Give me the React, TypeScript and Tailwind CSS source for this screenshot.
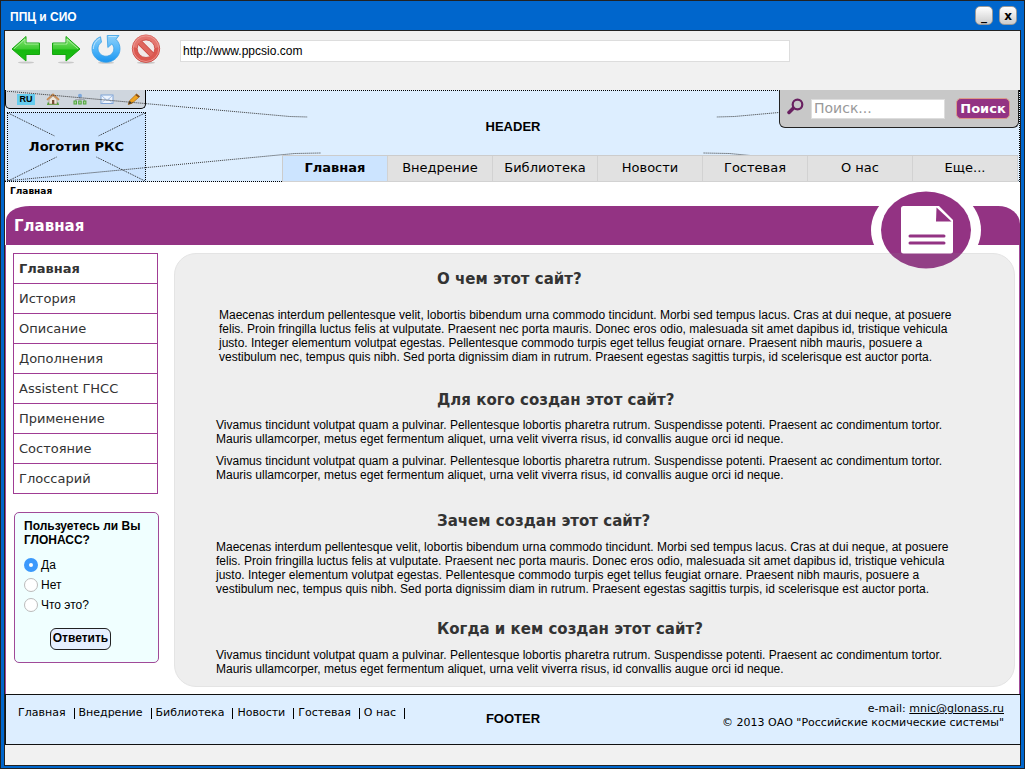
import { useState } from "react";

const tabs = ["Главная", "Внедрение", "Библиотека", "Новости", "Гостевая", "О нас", "Еще..."];
const sideItems = ["Главная", "История", "Описание", "Дополнения", "Assistent ГНСС", "Применение", "Состояние", "Глоссарий"];
const footerLinks = ["Главная", "Внедрение", "Библиотека", "Новости", "Гостевая", "О нас"];
const answers = ["Да", "Нет", "Что это?"];

const maecenas =
  "Maecenas interdum pellentesque velit, lobortis bibendum urna commodo tincidunt. Morbi sed tempus lacus. Cras at dui neque, at posuere felis. Proin fringilla luctus felis at vulputate. Praesent nec porta mauris. Donec eros odio, malesuada sit amet dapibus id, tristique vehicula justo. Integer elementum volutpat egestas. Pellentesque commodo turpis eget tellus feugiat ornare. Praesent nibh mauris, posuere a vestibulum nec, tempus quis nibh. Sed porta dignissim diam in rutrum. Praesent egestas sagittis turpis, id scelerisque est auctor porta.";
const vivamus =
  "Vivamus tincidunt volutpat quam a pulvinar. Pellentesque lobortis pharetra rutrum. Suspendisse potenti. Praesent ac condimentum tortor. Mauris ullamcorper, metus eget fermentum aliquet, urna velit viverra risus, id convallis augue orci id neque.";

function ArrowIcon({ flip = false }: { flip?: boolean }) {
  return (
    <svg width="30" height="30" viewBox="0 0 30 30" className={flip ? "-scale-x-100" : ""}>
      <defs>
        <linearGradient id="arrowFill" x1="0" y1="0" x2="0" y2="1">
          <stop offset="0" stopColor="#8ee67c" />
          <stop offset="0.5" stopColor="#3ecb32" />
          <stop offset="0.55" stopColor="#17b80f" />
          <stop offset="1" stopColor="#1cbf14" />
        </linearGradient>
      </defs>
      <ellipse cx="15" cy="28.500" rx="8" ry="1" fill="#c9c9c9" />
      <path d="M1 15 15 2.500v6.500H28.500v11.500H15V27z" fill="url(#arrowFill)" stroke="#16a510" strokeWidth="1" strokeLinejoin="round" />
      <path d="M3 14.800 14 5v5H27.500" fill="none" stroke="#b9f3ad" strokeWidth="0.8" />
    </svg>
  );
}

function ReloadIcon() {
  return (
    <svg width="30" height="30" viewBox="0 0 30 30">
      <defs>
        <linearGradient id="reloadFill" x1="0" y1="0" x2="0" y2="1">
          <stop offset="0" stopColor="#8fd0f8" />
          <stop offset="0.55" stopColor="#4db4fa" />
          <stop offset="1" stopColor="#1a94ee" />
        </linearGradient>
      </defs>
      <ellipse cx="15" cy="28.700" rx="8" ry="1" fill="#c9c9c9" />
      <path
        d="M9.500 2.800 10.500 8.200C8 9.800 6.800 12.300 7 15c.4 4.200 3.700 7.200 8 7.200s7.800-3.200 7.800-7.400c0-2-.7-3.600-1.900-4.900L16.800 13.500 16.200 1.500H28L25 5.300c2.500 2.500 4 5.700 4 9.500 0 7.500-6.200 13.500-14 13.500S1 22.300 1 14.800C1 9.300 4.500 4.600 9.500 2.800z"
        fill="url(#reloadFill)"
        stroke="#3a9fe6"
        strokeWidth="0.8"
      />
      <path d="M9 4.500C5 6.300 2.500 10 2.300 15M17.500 2.500H25.500" fill="none" stroke="#d3edfc" strokeWidth="0.8" />
    </svg>
  );
}

function StopIcon() {
  return (
    <svg width="30" height="30" viewBox="0 0 30 30">
      <ellipse cx="15" cy="28.700" rx="9" ry="1" fill="#c4c4c4" />
      <circle cx="15" cy="14.700" r="13.700" fill="#dc5850" stroke="#c8423c" strokeWidth="0.800" />
      <path d="M2.300 13a12.700 12.500 0 0 1 25.400 0c-8 3-17 3-25.400 0z" fill="#e98a84" opacity="0.600" />
      <circle cx="15" cy="14.700" r="8.800" fill="#f1eaea" stroke="#c8423c" strokeWidth="0.800" />
      <path d="m9 8.700 12 12" stroke="#c8423c" strokeWidth="5.500" />
      <path d="m8.800 8.500 12.400 12.400" stroke="#df665e" strokeWidth="4.200" />
      <circle cx="15" cy="14.700" r="12.800" fill="none" stroke="#f1aaa5" strokeWidth="0.700" />
    </svg>
  );
}

function HomeIcon() {
  return (
    <svg width="14" height="12" viewBox="0 0 14 12">
      <path d="M1 11.500h12" stroke="#69a84a" strokeWidth="1.200" />
      <path d="M3 6.500 7 3l4 3.500V11H3z" fill="#efe6da" stroke="#94806d" strokeWidth="0.600" />
      <path d="M1 6.800 7 1.300l6 5.500" fill="none" stroke="#c98a50" strokeWidth="1.700" />
      <path d="M6 7h2.300v4H6z" fill="#7b5138" />
      <path d="M1.500 9.500h1.500v2h-1.500zM11 9.500h1.500v2h-1.500z" fill="#4f9c37" />
    </svg>
  );
}

function SitemapIcon() {
  return (
    <svg width="14" height="12" viewBox="0 0 14 12">
      <path d="M7 4v3M2.500 8V6.500h9V8" fill="none" stroke="#9aa0a6" strokeWidth="0.800" />
      <circle cx="7" cy="2.800" r="2" fill="#7fa9dc" />
      <g fill="#a9d89a" stroke="#4fa43d" strokeWidth="1">
        <rect x="1" y="8" width="2.500" height="3" />
        <rect x="5.700" y="8" width="2.500" height="3" />
        <rect x="10.400" y="8" width="2.500" height="3" />
      </g>
    </svg>
  );
}

function MailIcon() {
  return (
    <svg width="14" height="12" viewBox="0 0 14 12">
      <rect x="1" y="2" width="12" height="8.500" fill="#edf4fd" stroke="#7ea3d6" />
      <path d="m1.500 2.500 5.500 5 5.500-5M1.500 10l4-3.800M12.500 10l-4-3.800" fill="none" stroke="#8fb0de" strokeWidth="0.800" />
    </svg>
  );
}

function PencilIcon() {
  return (
    <svg width="14" height="12" viewBox="0 0 14 12">
      <path d="M1.300 11.500 2.500 7.800 9.500 1l3.200 2.500L5 10.300z" fill="#f0a420" stroke="#a8650c" strokeWidth="0.700" />
      <path d="m9.500 1 3.200 2.500L11.500 4.600 8.400 2z" fill="#7d4a22" />
      <path d="M1.300 11.500 2.500 7.800 5 10.300z" fill="#4b3a26" />
    </svg>
  );
}

function DocumentBadge() {
  return (
    <svg width="112" height="93" viewBox="0 0 112 93">
      <clipPath id="abovePanel">
        <path d="M0 0h112v69H0z" />
      </clipPath>
      <clipPath id="overPanel">
        <path d="M0 69h112v24H0z" />
      </clipPath>
      <g clipPath="url(#abovePanel)">
        <ellipse cx="56" cy="46" rx="55" ry="46" fill="#fff" />
        <ellipse cx="56" cy="46" rx="45" ry="38.500" fill="#933383" />
      </g>
      <ellipse cx="56" cy="46" rx="45" ry="38.500" fill="#924086" clipPath="url(#overPanel)" />
      <path d="M33.500 22H69l14 14v31a2.500 2.500 0 0 1-2.500 2.500h-47A2.500 2.500 0 0 1 31 67V24.500a2.500 2.500 0 0 1 2.500-2.500z" fill="#fff" />
      <path d="M66.500 23.500 81.500 37.500H66z" fill="#933383" />
      <path d="M40 52h34M40 59h34" stroke="#933383" strokeWidth="3" strokeLinecap="round" />
    </svg>
  );
}

function Section({ title, children, className }: { title: string; children: React.ReactNode; className: string }) {
  return (
    <section className={className}>
      <h2 className="pl-[221px] text-[15px] leading-5 font-bold text-[#333] [font-family:'DejaVu_Sans',sans-serif]">{title}</h2>
      {children}
    </section>
  );
}

export default function App() {
  const [url, setUrl] = useState("http://www.ppcsio.com");
  const [answer, setAnswer] = useState("Да");

  return (
    <div className="mr-[3px] border border-[#222] bg-[#0066cc] px-[3px] pb-[2px] text-[12px] text-black [font-family:'Liberation_Sans',Arial,sans-serif]">
      <div className="flex h-[29px] items-center justify-between pr-1 pl-1.5">
        <h1 className="pt-0.5 text-[12px] font-bold text-white">ППЦ и СИО</h1>
        <div className="flex gap-1.5 [font-family:'DejaVu_Sans',sans-serif]">
          <button aria-label="Свернуть" className="h-[19px] w-[18px] rounded-[5px] border border-[#999] bg-linear-to-b from-white to-[#ccc] text-[12px] leading-3 font-bold">_</button>
          <button aria-label="Закрыть" className="h-[19px] w-[18px] rounded-[5px] border border-[#999] bg-linear-to-b from-white to-[#ccc] text-[12px] leading-3 font-bold">x</button>
        </div>
      </div>

      <div className="border border-[#222] bg-[#f1f1f1]">
        <div className="flex h-[59px] items-start pt-[3px] pl-1.5">
          <div className="flex w-[169px] gap-2.5">
            <button aria-label="Назад"><ArrowIcon /></button>
            <button aria-label="Вперёд"><ArrowIcon flip /></button>
            <button aria-label="Обновить"><ReloadIcon /></button>
            <button aria-label="Остановить"><StopIcon /></button>
          </div>
          <input
            aria-label="Адрес"
            value={url}
            onChange={(e) => setUrl(e.target.value)}
            className="mt-1.5 mr-[230px] h-[22px] min-w-0 flex-1 border border-[#ddd] bg-white px-0.5 text-[12px]"
          />
        </div>

        <header className="relative flex h-[92px] border border-l-0 border-dotted border-black bg-[#ddeeff]">
          <div className="pointer-events-none absolute inset-0 flex items-center justify-center pb-[19px] pl-0.5 text-[13px] font-bold">HEADER</div>
          <div className="flex w-[141px] flex-col justify-between">
            <div className="-mt-px flex h-[19px] items-center rounded-b-[5px] border border-t-0 border-black bg-[#cfd6de] pl-[11px]">
              <button className="mr-[11px] h-[11px] w-[18px] bg-[#66ccee] text-[9px] leading-[10px] font-bold">RU</button>
              <nav className="flex gap-[13px]">
                <a href="#home" aria-label="Домой"><HomeIcon /></a>
                <a href="#map" aria-label="Карта сайта"><SitemapIcon /></a>
                <a href="#mail" aria-label="Почта"><MailIcon /></a>
                <a href="#edit" aria-label="Правка"><PencilIcon /></a>
              </nav>
            </div>
            <div className="relative -mb-px ml-0.5 flex h-[70px] items-center justify-center border border-dotted border-black bg-[#cce4ff] text-[13px] font-bold [font-family:'DejaVu_Sans',sans-serif]">
              <svg className="absolute inset-0 h-full w-full" viewBox="0 0 138 68" preserveAspectRatio="none" stroke="#222" strokeWidth="1" strokeDasharray="1 1">
                <path d="M0 0 47 23M138 0 91 23M0 68 49 44M138 68 89 44" />
              </svg>
              <span className="relative">Логотип РКС</span>
            </div>
          </div>
          <svg className="pointer-events-none absolute inset-0 h-full w-full" viewBox="0 0 1015 90" preserveAspectRatio="none" stroke="#333" fill="none" strokeDasharray="1 1">
            <path d="M0 0 285 25.500 303 26M1015 0 730 25.500 712 26M0 90 290 62.500 316 62M1015 90 725 62.500 699 62" />
          </svg>
          <div className="relative flex min-w-0 flex-1 flex-col items-end justify-between">
            <form
              onSubmit={(e) => e.preventDefault()}
              className="-mt-px flex h-[38px] w-[240px] items-center rounded-b-[6px] border border-t-0 border-[#222] bg-[#c8c8c8] pr-2 pl-[7px] [font-family:'DejaVu_Sans',sans-serif]"
            >
              <svg width="17" height="17" viewBox="0 0 17 17" fill="none" stroke="#692060" className="mb-1 mr-[7px]">
                <circle cx="10.500" cy="6.500" r="4.800" strokeWidth="2.200" />
                <path d="m6 10.500-4 4" strokeWidth="3.500" strokeLinecap="round" />
              </svg>
              <input
                aria-label="Поиск"
                placeholder="Поиск..."
                className="h-5 w-[134px] border border-[#ddd] bg-white px-0.5 text-[14px] placeholder:text-[#999]"
              />
              <button className="ml-auto h-[21px] w-[54px] rounded-[5px] border border-[#dd9988] bg-[#933383] text-[13px] leading-4 font-bold text-white">Поиск</button>
            </form>
            <nav className="-mb-px mr-px grid w-[736px] grid-cols-7 border-t border-l border-[#ccc] text-[13px] [font-family:'DejaVu_Sans',sans-serif]">
              {tabs.map((t, i) => (
                <a
                  key={t}
                  href={"#tab" + i}
                  className={
                    "flex h-[26px] items-center justify-center border-r border-b border-[#d2d2d2] pb-0.5 " +
                    (i === 0 ? "bg-[#cce4ff] font-bold" : "bg-[#e1e1e1]")
                  }
                >
                  {t}
                </a>
              ))}
            </nav>
          </div>
        </header>

        <div className="h-6 bg-white pt-px pl-[5px] text-[9px] leading-4 font-bold [font-family:'DejaVu_Sans',sans-serif]">Главная</div>

        <div className="bg-white">
          <div className="relative ml-px flex h-[39px] items-center rounded-tl-[24px_14px] rounded-tr-[22px_18px] bg-[#933383] pl-2">
            <h2 className="pt-px text-[15px] font-bold text-white [font-family:'DejaVu_Sans',sans-serif]">Главная</h2>
            <div className="absolute -top-[22px] right-[38px] z-10"><DocumentBadge /></div>
          </div>
        </div>

        <main className="flex items-start gap-4 border-x border-[#a04a98] bg-white px-[7px] pt-2 pb-[7px]">
          <aside className="w-[145px] shrink-0">
            <nav className="grid gap-px bg-[#a03c94] p-px text-[13px] text-[#333] [font-family:'DejaVu_Sans',sans-serif]">
              {sideItems.map((s, i) => (
                <a key={s} href={"#side" + i} className={"flex h-[29px] items-center bg-white pl-[5px] " + (i === 0 ? "font-bold" : "")}>
                  {s}
                </a>
              ))}
            </nav>
            <form
              onSubmit={(e) => e.preventDefault()}
              className="mt-[18px] ml-px -mr-px h-[151px] rounded-[5px] border border-[#a04a98] bg-[#f0ffff] pt-1.5 pl-[9px]"
            >
              <fieldset>
                <legend className="mb-2 text-[12px] leading-[14px] font-bold">Пользуетесь ли Вы ГЛОНАСС?</legend>
                {answers.map((a) => (
                  <label key={a} className="flex h-5 items-center gap-[3px]">
                    <input
                      type="radio"
                      name="poll"
                      checked={answer === a}
                      onChange={() => setAnswer(a)}
                      className="size-3.5 appearance-none rounded-full border border-[#bbb] bg-white checked:border-5 checked:border-[#3b99fc]"
                    />
                    {a}
                  </label>
                ))}
              </fieldset>
              <button className="mt-[13px] ml-[26px] h-[22px] w-[61px] rounded-[6px] border border-[#222] bg-[#e6f0ff] pb-1 text-[12px] font-bold">Ответить</button>
            </form>
          </aside>

          <article className="-mr-[3px] min-w-0 flex-1 rounded-[22px] border border-[#e4e4e4] bg-[#eee] pt-[15px] pr-[53px] pb-2.5 pl-[41px] leading-[14px]">
            <Section title="О чем этот сайт?" className="mb-[26px]">
              <p className="mt-[19px] ml-[3px]">{maecenas}</p>
            </Section>
            <Section title="Для кого создан этот сайт?" className="mb-[29px]">
              <p className="mt-2">{vivamus}</p>
              <p className="mt-2">{vivamus}</p>
            </Section>
            <Section title="Зачем создан этот сайт?" className="mb-[23px]">
              <p className="mt-[9px]">{maecenas}</p>
            </Section>
            <Section title="Когда и кем создан этот сайт?" className="">
              <p className="mt-[9px]">{vivamus}</p>
            </Section>
          </article>
        </main>

        <footer className="relative -mr-px flex h-[51px] justify-between border border-[#111] bg-[#ddeeff] pr-4 pl-3 text-[11px] leading-[14px] [font-family:'DejaVu_Sans',sans-serif]">
          <div className="pointer-events-none absolute inset-0 flex items-center justify-center pb-0.5 text-[13px] font-bold [font-family:'Liberation_Sans',Arial,sans-serif]">FOOTER</div>
          <nav className="relative flex items-start pt-[11px]">
            {footerLinks.map((f, i) => (
              <span key={f} className="flex items-center">
                <a href={"#foot" + i}>{f}</a>
                <span className="mr-1 ml-2 h-[11px] w-px bg-black" />
              </span>
            ))}
          </nav>
          <address className="relative pt-[7px] text-right not-italic">
            e-mail: <a href="mailto:mnic@glonass.ru" className="underline">mnic@glonass.ru</a>
            <br />© 2013 ОАО "Российские космические системы"
          </address>
        </footer>
        <div className="h-5" />
      </div>
    </div>
  );
}
